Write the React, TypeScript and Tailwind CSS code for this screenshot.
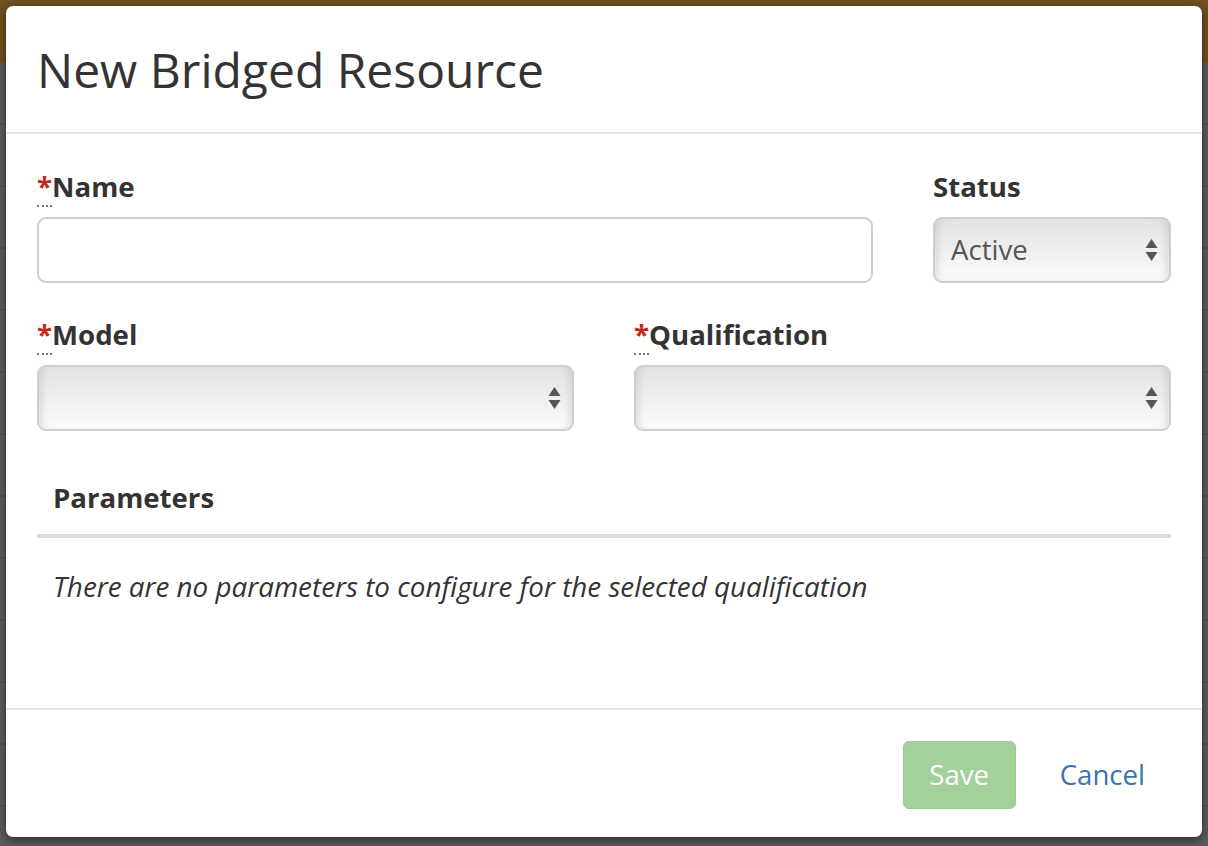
import React from "react";

const font = { fontFamily: '"Open Sans", "Noto Sans", sans-serif' };

function Arrows() {
  return (
    <svg width="13" height="24" viewBox="0 0 13 24" className="shrink-0">
      <path d="M6.5 1 L12.5 10 L0.5 10 Z" fill="#555" />
      <path d="M6.5 23 L12.5 14 L0.5 14 Z" fill="#555" />
    </svg>
  );
}

function Select({ value, className }: { value?: string; className: string }) {
  return (
    <div
      className={
        "flex h-[66px] items-center justify-between rounded-[9px] border-2 border-[#cfcfcf] bg-gradient-to-b from-[#e3e3e3] to-[#fbfbfb] pl-[16px] pr-[11px] shadow-[inset_8px_0_8px_-6px_rgba(0,0,0,0.12),inset_-8px_0_8px_-6px_rgba(0,0,0,0.12)] " +
        className
      }
    >
      <span className="text-[27.6px] leading-none text-[#555]">{value}</span>
      <Arrows />
    </div>
  );
}

function Label({ text, required }: { text: string; required?: boolean }) {
  return (
    <div className="text-[27.6px] font-bold leading-[36px] text-[#333]">
      {required && (
        <span className="border-b-2 border-dotted border-[#777] text-[#c4271b]">*</span>
      )}
      {text}
    </div>
  );
}

export default function App() {
  return (
    <div className="relative h-[846px] w-[1208px] overflow-hidden bg-[#5b5b5b]" style={font}>
      <div className="h-[63px] bg-[#6e4f1e]" />
      <div className="flex flex-col">
        {Array.from({ length: 12 }).map((_, i) => (
          <div key={i} className="h-[62px] border-b-2 border-[#525252]" />
        ))}
      </div>

      <div className="absolute left-[6px] top-[6px] flex h-[831px] w-[1196px] flex-col rounded-[7px] bg-white shadow-[0_3px_8px_rgba(0,0,0,0.5)]">
        <div className="flex h-[128px] shrink-0 items-center border-b-2 border-[#e5e5e5] pl-[31px]">
          <h1 className="pt-[2px] text-[48px] font-normal leading-none text-[#333]">
            New Bridged Resource
          </h1>
        </div>

        <div className="flex flex-1 flex-col px-[31px] pt-[34px]">
          <div className="flex justify-between">
            <div className="flex w-[836px] flex-col">
              <Label text="Name" required />
              <div className="mt-[13px] h-[66px] rounded-[9px] border-2 border-[#cfcfcf] bg-white" />
            </div>
            <div className="flex w-[238px] flex-col">
              <Label text="Status" />
              <Select value="Active" className="mt-[13px]" />
            </div>
          </div>

          <div className="mt-[33px] flex justify-between">
            <div className="flex w-[537px] flex-col">
              <Label text="Model" required />
              <Select className="mt-[13px]" />
            </div>
            <div className="flex w-[537px] flex-col">
              <Label text="Qualification" required />
              <Select className="mt-[13px]" />
            </div>
          </div>

          <div className="mt-[48px] border-b-4 border-[#dddddd] pb-[19px] pl-[16px] text-[27.6px] font-bold leading-[36px] text-[#333]">
            Parameters
          </div>
          <div className="mt-[30px] pl-[16px] text-[27.8px] italic leading-[36px] text-[#333]">
            There are no parameters to configure for the selected qualification
          </div>
        </div>

        <div className="flex h-[129px] shrink-0 items-center justify-end gap-[44px] border-t-2 border-[#e5e5e5] pr-[57px]">
          <button className="mt-[3px] flex h-[68px] w-[113px] items-center justify-center rounded-[6px] border border-[#98c98f] bg-[#a3d19b] text-[27.6px] text-white">
            Save
          </button>
          <span className="mt-[3px] text-[27.6px] text-[#3b72b4]">Cancel</span>
        </div>
      </div>
    </div>
  );
}
